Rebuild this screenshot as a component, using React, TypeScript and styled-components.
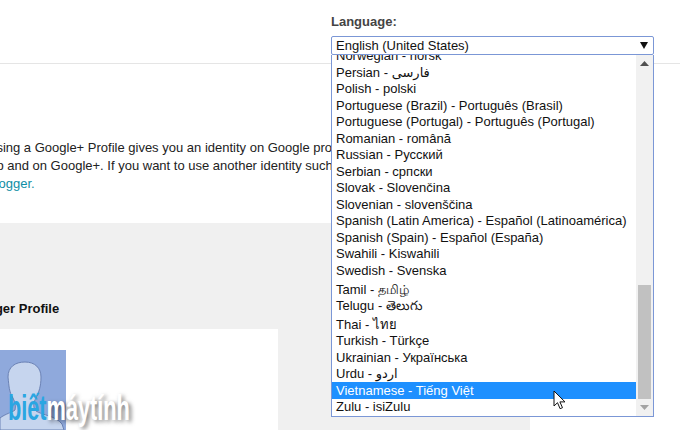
import React from "react";
import styled, { createGlobalStyle } from "styled-components";

const languages = [
  { label: "Norwegian - norsk" },
  { label: "Persian - فارسی" },
  { label: "Polish - polski" },
  { label: "Portuguese (Brazil) - Português (Brasil)" },
  { label: "Portuguese (Portugal) - Português (Portugal)" },
  { label: "Romanian - română" },
  { label: "Russian - Русский" },
  { label: "Serbian - српски" },
  { label: "Slovak - Slovenčina" },
  { label: "Slovenian - slovenščina" },
  { label: "Spanish (Latin America) - Español (Latinoamérica)" },
  { label: "Spanish (Spain) - Español (España)" },
  { label: "Swahili - Kiswahili" },
  { label: "Swedish - Svenska" },
  { label: "Tamil - தமிழ்", height: 20 },
  { label: "Telugu - తెలుగు", height: 17.5 },
  { label: "Thai - ไทย" },
  { label: "Turkish - Türkçe" },
  { label: "Ukrainian - Українська" },
  { label: "Urdu - اردو" },
  { label: "Vietnamese - Tiếng Việt", selected: true },
  { label: "Zulu - isiZulu" },
];

const App = () => (
  <Page>
    <GlobalStyle />
    <Header>
      <LanguageField>
        <FieldLabel>Language:</FieldLabel>
        <SelectBox>
          <span>English (United States)</span>
          <Caret viewBox="0 0 8 7">
            <path d="M0 0h8L4 7z" fill="#111" />
          </Caret>
        </SelectBox>
        <Dropdown>
          <OptionList>
            {languages.map((lang) => (
              <Option key={lang.label} $selected={lang.selected} $height={lang.height}>
                {lang.label}
              </Option>
            ))}
          </OptionList>
          <ScrollTrack>
            <ScrollArrow viewBox="0 0 9 5">
              <path d="M0 5L4.5 0 9 5z" fill="#505050" />
            </ScrollArrow>
            <ScrollThumb />
            <ScrollArrow viewBox="0 0 9 5">
              <path d="M0 0h9L4.5 5z" fill="#a3a3a3" />
            </ScrollArrow>
          </ScrollTrack>
        </Dropdown>
      </LanguageField>
    </Header>

    <Intro>
      <IntroText>
        Using a Google+ Profile gives you an identity on Google products
        <br />
        Up and on Google+. If you want to use another identity such as
        <br />
        <IntroLink>Blogger.</IntroLink>
      </IntroText>
    </Intro>

    <ProfileBand>
      <ProfileTitle>Blogger Profile</ProfileTitle>
      <ProfileCard>
        <Avatar viewBox="0 0 66 80">
          <rect width="66" height="80" fill="#8fa9dc" />
          <path
            d="M0 68C5 64 13 62 15 60C16 56 15 52 13 48C9 42 9 36 8 27C8 17 15 12 25 12C35 12 41 18 41 27C41 36 39 42 36 48C33 53 33 58 36 61C42 65 56 66 62 74L64 80L0 80Z"
            fill="#c6d5ee"
            stroke="#6b82b5"
            strokeWidth="1"
          />
        </Avatar>
      </ProfileCard>
    </ProfileBand>

    <Watermark>
      <WatermarkBlue>biết</WatermarkBlue>
      <WatermarkWhite>máytính</WatermarkWhite>
    </Watermark>

    <Cursor viewBox="0 0 13 20">
      <path
        d="M1 1v15l3.5-3.3 2.6 6 2.4-1-2.6-5.8H12z"
        fill="#fff"
        stroke="#111"
        strokeWidth="1"
        strokeLinejoin="round"
      />
    </Cursor>
  </Page>
);

export default App;

const GlobalStyle = createGlobalStyle`
  html, body {
    margin: 0;
    padding: 0;
    overflow: hidden;
    background: #fff;
  }
`;

const Page = styled.div`
  position: relative;
  width: 680px;
  height: 430px;
  overflow: hidden;
  display: flex;
  flex-direction: column;
  background: #fff;
  color: #222;
  font-family: "Liberation Sans", Arial, "DejaVu Sans", "Noto Sans", sans-serif;
  font-size: 13px;
`;

const Header = styled.header`
  height: 63px;
  flex: none;
  padding-left: 331px;
  border-bottom: 1px solid #e5e5e5;
`;

const LanguageField = styled.div`
  position: relative;
  width: 323px;
  padding-top: 15px;
`;

const FieldLabel = styled.div`
  height: 21px;
  font-weight: bold;
  line-height: 14px;
  color: #444;
`;

const SelectBox = styled.div`
  box-sizing: border-box;
  height: 19px;
  display: flex;
  align-items: center;
  justify-content: space-between;
  padding: 0 5px 0 4px;
  border: 1px solid #7b97d6;
  border-radius: 2px;
  background: #fff;
  color: #111;
`;

const Caret = styled.svg`
  width: 8px;
  height: 7px;
`;

const Dropdown = styled.div`
  position: absolute;
  top: 55px;
  left: 0;
  right: 0;
  box-sizing: border-box;
  height: 362px;
  display: flex;
  overflow: hidden;
  border: 1px solid #7b97d6;
  border-top: none;
  background: #fff;
`;

const OptionList = styled.div`
  flex: 1;
  min-width: 0;
  margin-top: -7.5px;
`;

const Option = styled.div<{ $selected?: boolean; $height?: number }>`
  height: ${(p) => p.$height ?? 16.5}px;
  display: flex;
  align-items: ${(p) => (p.$height ? "flex-end" : "center")};
  padding-left: 4px;
  white-space: nowrap;
  color: ${(p) => (p.$selected ? "#fff" : "#111")};
  background: ${(p) => (p.$selected ? "#1e90ff" : "transparent")};
`;

const ScrollTrack = styled.div`
  width: 17px;
  flex: none;
  display: flex;
  flex-direction: column;
  align-items: center;
  background: #f1f1f1;
`;

const ScrollArrow = styled.svg`
  width: 9px;
  height: 5px;
  margin: 6px 0;
`;

const ScrollThumb = styled.div`
  width: 13px;
  height: 114px;
  margin-top: 213px;
  background: #c1c1c1;
`;

const Intro = styled.section`
  height: 159px;
  flex: none;
  padding-top: 75px;
  box-sizing: border-box;
`;

const IntroText = styled.p`
  margin: 0 0 0 -13px;
  width: 800px;
  line-height: 18px;
  color: #222;
`;

const IntroLink = styled.span`
  color: #0e8ea5;
`;

const ProfileBand = styled.section`
  width: 530px;
  flex: 1;
  background: #f0f0f0;
  padding-top: 79px;
  box-sizing: border-box;
`;

const ProfileTitle = styled.div`
  margin-left: -34px;
  height: 27px;
  font-weight: bold;
  line-height: 14px;
  color: #111;
`;

const ProfileCard = styled.div`
  width: 278px;
  height: 120px;
  padding-top: 21px;
  background: #fff;
`;

const Avatar = styled.svg`
  display: block;
  width: 66px;
  height: 80px;
`;

const Watermark = styled.div`
  position: absolute;
  left: 8px;
  top: 389px;
  display: flex;
  font-weight: bold;
  font-size: 35px;
  line-height: 38px;
  transform: scaleX(0.62);
  transform-origin: left top;
`;

const WatermarkBlue = styled.span`
  color: #2aa6e2;
`;

const WatermarkWhite = styled.span`
  color: #fff;
  text-shadow: 4px 2px 6px rgba(0, 0, 0, 0.55);
`;

const Cursor = styled.svg`
  position: absolute;
  left: 552.5px;
  top: 389.5px;
  width: 13px;
  height: 20px;
`;
